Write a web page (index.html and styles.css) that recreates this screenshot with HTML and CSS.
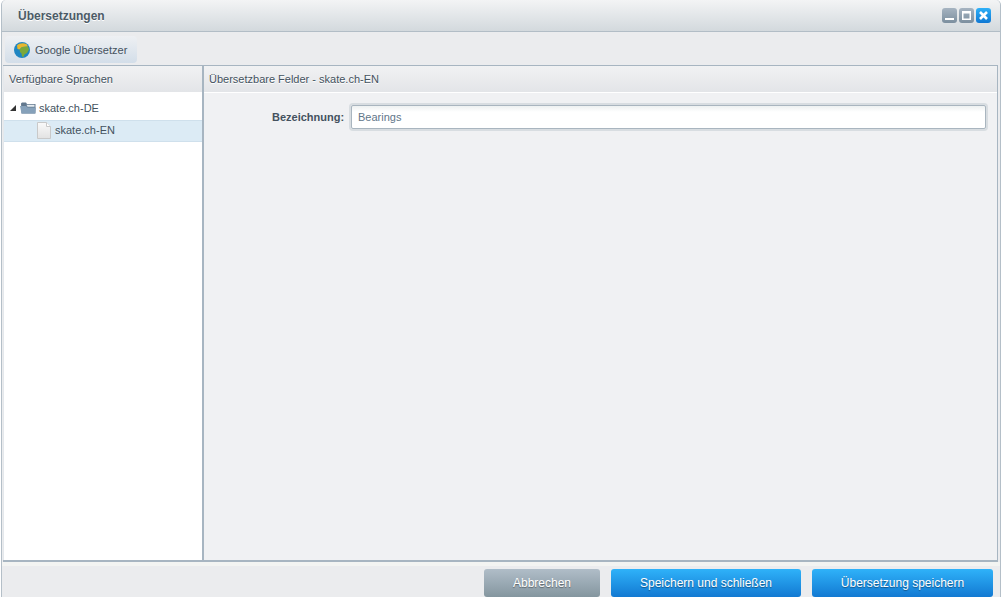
FILE: index.html
```html
<!DOCTYPE html>
<html lang="en">
<head>
  <meta charset="UTF-8" />
  <title>Übersetzungen</title>
  <link rel="stylesheet" href="styles.css">
</head>
<body>

<div class="window">
  <!-- title bar -->
  <div class="titlebar">
    <span class="title">Übersetzungen</span>
    <div class="win-buttons">
      <span class="win-btn">
        <svg width="15" height="15" viewBox="0 0 15 15"><rect x="3" y="10" width="9" height="2" fill="#fff"/></svg>
      </span>
      <span class="win-btn">
        <svg width="15" height="15" viewBox="0 0 15 15"><path d="M3 3h9v9H3z M4.500 5.500v5h6v-5z" fill="#fff" fill-rule="evenodd"/></svg>
      </span>
      <span class="win-btn win-close">
        <svg width="15" height="15" viewBox="0 0 15 15"><path d="M4 4l7 7M11 4l-7 7" stroke="#fff" stroke-width="2.600" fill="none"/></svg>
      </span>
    </div>
  </div>

  <!-- toolbar -->
  <div class="toolbar">
    <button class="tool-btn">
      <svg width="16" height="16" viewBox="0 0 16 16">
        <circle cx="8" cy="8" r="8" fill="#1f86c2"/>
        <path d="M3 3.500C5 1.200 9 .6 12.500 2L14 4.500 8 5 5.500 7.500 3.500 7z" fill="#e8b72e"/>
        <path d="M5.500 7.500L8 5l6-.5 1 3-2 3.500-2.500 1.500-1 2.500-1.500-.5-.5-3-1.500-1.500z" fill="#7aa93a"/>
      </svg>
      Google Übersetzer
    </button>
  </div>

  <!-- panels -->
  <div class="panels">
    <div class="lang-panel">
      <div class="panel-head">Verfügbare Sprachen</div>
      <ul class="tree">
        <li class="tree-row">
          <span class="tree-arrow"></span>
          <svg class="folder" width="16" height="12" viewBox="0 0 16 12">
            <path d="M1 1.500L2 .5h4l1 1.500h8.500v9.500H1.500z" fill="#62788e"/>
            <path d="M6.500 2.800h8v2h-7z" fill="#e6ecf1"/>
            <path d="M0 4h6l1.500 1.500H16l-1 6H1.500z" fill="#86a1ba"/>
          </svg>
          skate.ch-DE
        </li>
        <li class="tree-row tree-child selected">
          <svg width="14" height="17" viewBox="0 0 14 17">
            <defs>
              <linearGradient id="sheet" x1="0" y1="0" x2="0" y2="1">
                <stop offset="0" stop-color="#fafafa"/>
                <stop offset="1" stop-color="#e2e2e2"/>
              </linearGradient>
            </defs>
            <path d="M.5.500h9l4 4v12H.5z" fill="url(#sheet)" stroke="#c9c9c9"/>
            <path d="M9.500.500v4h4" fill="#fff" stroke="#c9c9c9"/>
          </svg>
          skate.ch-EN
        </li>
      </ul>
    </div>
    <div class="fields-panel">
      <div class="panel-head">Übersetzbare Felder - skate.ch-EN</div>
      <div class="form-row">
        <label class="field-label" for="bez">Bezeichnung:</label>
        <input class="field-input" id="bez" type="text" value="Bearings">
      </div>
    </div>
  </div>

  <!-- footer -->
  <div class="footer">
    <button class="btn btn-grey">Abbrechen</button>
    <button class="btn btn-blue btn-close">Speichern und schließen</button>
    <button class="btn btn-blue btn-save">Übersetzung speichern</button>
  </div>
</div>

</body>
</html>
```

FILE: styles.css
```css
/* ─── page base ─────────────────────────────────────────── */
body {
  margin: 0;
  height: 597px;
  overflow: hidden;
  background: #fff;
  font-family: "Liberation Sans", Arial, sans-serif;
  font-size: 11px;
  color: #44525e;
}

.window {
  width: 1000px;
  height: 597px;
  margin-left: 1px;
  box-sizing: border-box;
  display: flex;
  flex-direction: column;
  background: #ebecee;
  border-left: 1px solid #b4bfc8;
  border-right: 1px solid #b4bfc8;
  border-top-left-radius: 5px;
  border-top-right-radius: 5px;
}

/* ─── title bar ─────────────────────────────────────────── */
.titlebar {
  height: 32px;
  flex: none;
  box-sizing: border-box;
  display: flex;
  align-items: center;
  justify-content: space-between;
  padding: 0 9px 0 16px;
  background: linear-gradient(#f3f4f5, #d3d9dd);
  border-bottom: 1px solid #b2bdc6;
  border-top-left-radius: 5px;
  border-top-right-radius: 5px;
}

.title {
  font-size: 12px;
  font-weight: bold;
  color: #4b5a66;
  text-shadow: 0 1px 0 #fff;
}

.win-buttons {
  display: flex;
  gap: 2px;
}

.win-btn {
  width: 15px;
  height: 15px;
  border-radius: 3px;
  background: linear-gradient(#a6b4c1, #7c8f9f);
}

.win-close {
  background: linear-gradient(#2eb0f8, #0f78d3);
}

.win-btn svg {
  display: block;
}

/* ─── toolbar ───────────────────────────────────────────── */
.toolbar {
  height: 33px;
  flex: none;
  box-sizing: border-box;
  padding: 4px 0 0 3px;
}

.tool-btn {
  display: flex;
  align-items: center;
  gap: 5px;
  width: 132px;
  height: 27px;
  padding: 0 0 0 9px;
  border: none;
  border-radius: 4px;
  background: linear-gradient(#eef0f3, #d3dee9);
  font: 11px "Liberation Sans", Arial, sans-serif;
  color: #44525e;
}

/* ─── panels ────────────────────────────────────────────── */
.panels {
  height: 497px;
  width: 995px;
  flex: none;
  box-sizing: border-box;
  display: flex;
  margin-left: 1px;
  border: 1px solid #a7b5c1;
  border-width: 1px 1px 2px 0;
}

.lang-panel {
  width: 201px;
  flex: none;
  box-sizing: border-box;
  background: #fff;
  border-left: 1px solid #e4e8ec;
  border-right: 2px solid #a7b5c1;
}

.fields-panel {
  flex: 1;
  background: #f0f1f3;
}

.panel-head {
  height: 27px;
  box-sizing: border-box;
  padding: 7px 0 0 5px;
  background: linear-gradient(#f1f2f3, #e3e5e8);
  border-bottom: 1px solid #fff;
  text-shadow: 0 1px 0 #fff;
}

/* ─── tree ──────────────────────────────────────────────── */
.tree {
  list-style: none;
  margin: 0;
  padding: 0;
}

.tree-row {
  display: flex;
  align-items: center;
  height: 22px;
  margin-top: 4px;
  padding-left: 6px;
}

.tree-arrow {
  width: 0;
  height: 0;
  margin-right: 4px;
  border-left: 6px solid transparent;
  border-bottom: 6px solid #333;
}

.folder {
  margin-right: 3px;
}

.tree-child {
  margin-top: 1px;
  padding-left: 33px;
  padding-bottom: 2px;
  gap: 4px;
}

.selected {
  background: #dcebf5;
  border-top: 1px solid #cfe0ec;
  border-bottom: 1px solid #cfe0ec;
  box-sizing: border-box;
}

/* ─── form ──────────────────────────────────────────────── */
.form-row {
  display: flex;
  align-items: center;
  margin-top: 12px;
  padding-left: 68px;
}

.field-label {
  width: 72px;
  margin-right: 7px;
  font-weight: bold;
  text-align: right;
  white-space: nowrap;
}

.field-input {
  width: 635px;
  height: 24px;
  box-sizing: border-box;
  padding: 0 6px;
  border: 1px solid #a9b5bf;
  border-radius: 2px;
  box-shadow: 0 0 0 2px #d8dde1;
  background: linear-gradient(#eef1f1, #fff 6px);
  font: 11px "Liberation Sans", Arial, sans-serif;
  color: #5f7689;
  outline: none;
}

/* ─── footer buttons ────────────────────────────────────── */
.footer {
  flex: 1;
  display: flex;
  justify-content: flex-end;
  align-items: flex-start;
  gap: 11px;
  padding: 3px 7px 0 0;
  border-top: 4px solid #f3f4f2;
}

.btn {
  height: 28px;
  border: none;
  border-radius: 3px;
  padding: 0;
  font: 12px "Liberation Sans", Arial, sans-serif;
  color: #fff;
  text-shadow: 0 1px 1px rgba(0, 0, 0, 0.4);
}

.btn-grey {
  width: 116px;
  background: linear-gradient(#b0bdc8, #84969f);
}

.btn-blue {
  background: linear-gradient(#2fb2f9, #1279d2);
}

.btn-close {
  width: 190px;
}

.btn-save {
  width: 181px;
}
```
